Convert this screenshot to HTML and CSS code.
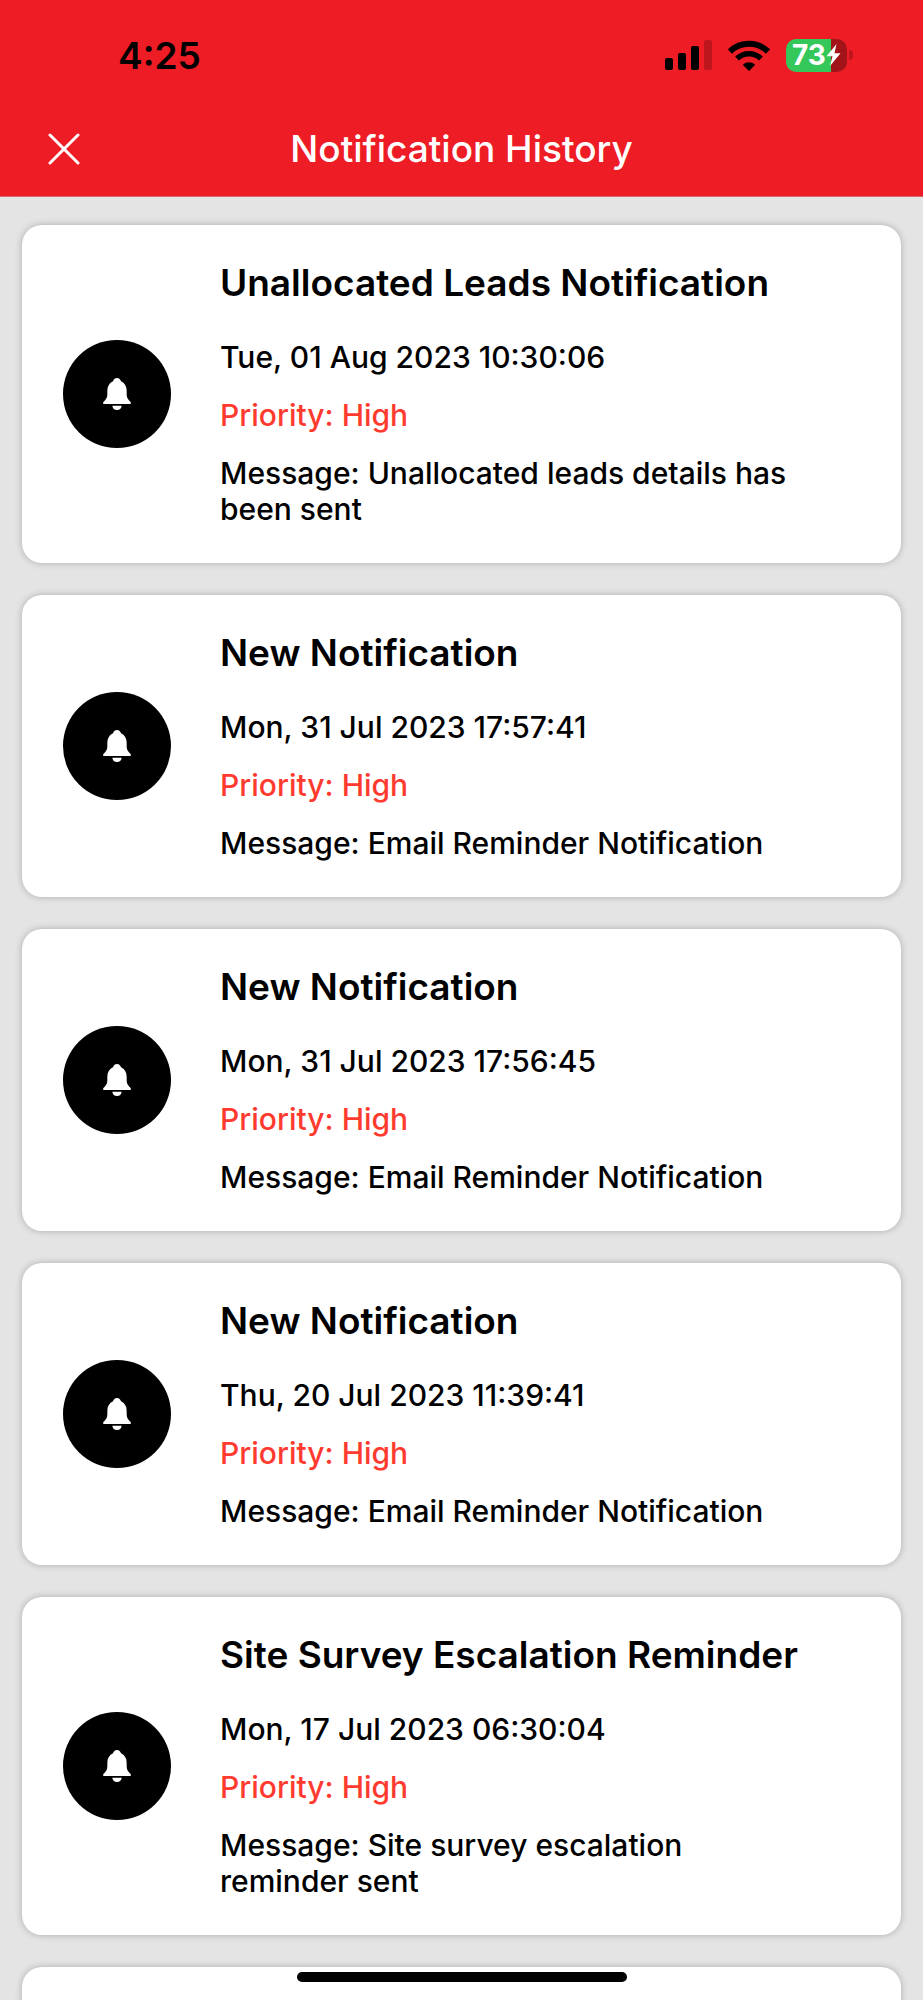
FILE: index.html
```html
<!DOCTYPE html>
<html lang="en">
<head>
  <meta charset="UTF-8" />
  <meta name="viewport" content="width=device-width, initial-scale=1.0"/>
  <title>Notification History</title>
  <link rel="stylesheet" href="styles.css">
</head>
<body>

  <!-- Shared bell icon -->
  <svg class="sprite" aria-hidden="true">
    <symbol id="bell" viewBox="0 0 84 96">
      <path d="M42 0C35 0 32 4 30 10C19 15 13 25 13 38V49C13 58 10 63 5 68C1 72 0 73 0 76Q0 78 4 78H80Q84 78 84 76C84 73 83 72 79 68C74 63 71 58 71 49V38C71 25 65 15 54 10C52 4 49 0 42 0Z"/>
      <path d="M28 83H56C55 91 50 96 42 96S29 91 28 83Z"/>
    </symbol>
  </svg>

  <div class="app">
    <header class="header">
      <div class="status-bar">
        <span class="time">4:25</span>
        <div class="status-icons">
          <svg class="signal" viewBox="0 0 47 30" aria-hidden="true">
            <rect x="0" y="18" width="8" height="12" rx="2"/>
            <rect x="13" y="13" width="8" height="17" rx="2"/>
            <rect x="26" y="6" width="8" height="24" rx="2"/>
            <rect class="weak" x="39" y="0" width="8" height="30" rx="2"/>
          </svg>
          <svg class="wifi" viewBox="0 0 42 31" aria-hidden="true">
            <path d="M2 11.5A27.3 27.3 0 0 1 40 11.5" stroke-width="6"/>
            <path d="M9 18.5A17.3 17.3 0 0 1 33 18.5" stroke-width="5.5"/>
            <path class="dot" d="M21 31L14.8 24.7A9 9 0 0 1 27.2 24.7Z"/>
          </svg>
          <div class="battery">
            <span class="battery-body">
              <span class="level">73</span>
              <svg class="bolt" viewBox="0 0 15 22" aria-hidden="true">
                <path d="M10.5 0L0.5 12.2H6.5L4 22L14.5 9.2H8.5Z"/>
              </svg>
            </span>
            <span class="battery-cap"></span>
          </div>
        </div>
      </div>
      <div class="nav-bar">
        <button class="close-btn" type="button" aria-label="Close">
          <svg viewBox="0 0 32 32" aria-hidden="true"><path d="M2 2L30 30M30 2L2 30"/></svg>
        </button>
        <h1>Notification History</h1>
      </div>
    </header>

    <main class="list">
      <article class="card">
        <div class="icon"><svg><use href="#bell"/></svg></div>
        <div class="details">
          <h2>Unallocated Leads Notification</h2>
          <p>Tue, 01 Aug 2023 10:30:06</p>
          <p class="priority">Priority: High</p>
          <p>Message: Unallocated leads details has been sent</p>
        </div>
      </article>

      <article class="card">
        <div class="icon"><svg><use href="#bell"/></svg></div>
        <div class="details">
          <h2>New Notification</h2>
          <p>Mon, 31 Jul 2023 17:57:41</p>
          <p class="priority">Priority: High</p>
          <p>Message: Email Reminder Notification</p>
        </div>
      </article>

      <article class="card">
        <div class="icon"><svg><use href="#bell"/></svg></div>
        <div class="details">
          <h2>New Notification</h2>
          <p>Mon, 31 Jul 2023 17:56:45</p>
          <p class="priority">Priority: High</p>
          <p>Message: Email Reminder Notification</p>
        </div>
      </article>

      <article class="card">
        <div class="icon"><svg><use href="#bell"/></svg></div>
        <div class="details">
          <h2>New Notification</h2>
          <p>Thu, 20 Jul 2023 11:39:41</p>
          <p class="priority">Priority: High</p>
          <p>Message: Email Reminder Notification</p>
        </div>
      </article>

      <article class="card">
        <div class="icon"><svg><use href="#bell"/></svg></div>
        <div class="details">
          <h2>Site Survey Escalation Reminder</h2>
          <p>Mon, 17 Jul 2023 06:30:04</p>
          <p class="priority">Priority: High</p>
          <p>Message: Site survey escalation reminder sent</p>
        </div>
      </article>

      <article class="card"></article>
    </main>

    <div class="home-indicator"></div>
  </div>

</body>
</html>
```

FILE: styles.css
```css
* {
  box-sizing: border-box;
}

body {
  margin: 0;
  background: #e4e4e4;
  color: #000;
  font-family: Inter, 'Liberation Sans', sans-serif;
}

h1, h2, p {
  margin: 0;
}

.sprite {
  display: none;
}

.app {
  display: flex;
  flex-direction: column;
  height: 100vh;
}

/* Header */
.header {
  flex-shrink: 0;
  background: #ee1c25;
  border-bottom: 1px solid #d5696d;
}

.status-bar {
  display: flex;
  align-items: center;
  justify-content: space-between;
  height: 110px;
  padding: 0 70px 0 118px;
}

.time {
  font-size: 37px;
  font-weight: 600;
}

.status-icons {
  display: flex;
  align-items: center;
  gap: 16px;
}

.signal {
  width: 47px;
  height: 30px;
}

.signal .weak {
  fill: #bd161d;
}

.wifi {
  width: 42px;
  height: 31px;
  fill: none;
  stroke: #000;
}

.wifi .dot {
  fill: #000;
  stroke: none;
}

.battery {
  display: flex;
  align-items: center;
  gap: 2px;
}

.battery-body {
  display: flex;
  align-items: center;
  justify-content: center;
  width: 61px;
  height: 33px;
  border-radius: 10px;
  background: linear-gradient(to right, #34c759 73%, #a3131a 73%);
}

.level {
  color: #fff;
  font-size: 28px;
  font-weight: 700;
  line-height: 33px;
}

.bolt {
  width: 15px;
  height: 22px;
  fill: #fff;
}

.battery-cap {
  width: 4px;
  height: 10px;
  border-radius: 0 5px 5px 0;
  background: #bd161d;
}

.nav-bar {
  display: grid;
  grid-template-columns: 48px 1fr 48px;
  align-items: center;
  height: 86px;
  padding: 0 40px 8px;
}

.nav-bar h1 {
  color: #fff;
  font-size: 37px;
  font-weight: 500;
  line-height: 48px;
  text-align: center;
}

.close-btn {
  display: flex;
  align-items: center;
  justify-content: center;
  width: 48px;
  height: 48px;
  padding: 0;
  border: none;
  background: none;
  cursor: pointer;
}

.close-btn svg {
  width: 32px;
  height: 32px;
  stroke: #fff;
  stroke-width: 3;
  stroke-linecap: round;
}

/* Notifications */
.list {
  display: flex;
  flex: 1;
  flex-direction: column;
  gap: 32px;
  min-height: 0;
  padding: 28px 22px;
  overflow-y: auto;
  scrollbar-width: none;
}

.card {
  display: flex;
  flex-shrink: 0;
  align-items: center;
  gap: 49px;
  min-height: 302px;
  padding: 0 96px 0 41px;
  border-radius: 20px;
  background: #fff;
  box-shadow: 0 0 7px rgba(0, 0, 0, 0.25);
}

.icon {
  display: flex;
  flex-shrink: 0;
  align-items: center;
  justify-content: center;
  width: 108px;
  height: 108px;
  border-radius: 50%;
  background: #000;
}

.icon svg {
  width: 28px;
  height: 32px;
  fill: #fff;
}

.details {
  display: flex;
  flex: 1;
  flex-direction: column;
  gap: 22px;
  padding: 34px 0 36px;
}

.details h2 {
  margin-bottom: 10px;
  font-size: 37px;
  font-weight: 600;
  line-height: 48px;
}

.details p {
  font-size: 30px;
  font-weight: 500;
  line-height: 36px;
}

.details .priority {
  color: #ff3b30;
}

.home-indicator {
  position: fixed;
  bottom: 18px;
  left: 50%;
  width: 330px;
  height: 10px;
  border-radius: 5px;
  background: #000;
  transform: translateX(-50%);
}
```
